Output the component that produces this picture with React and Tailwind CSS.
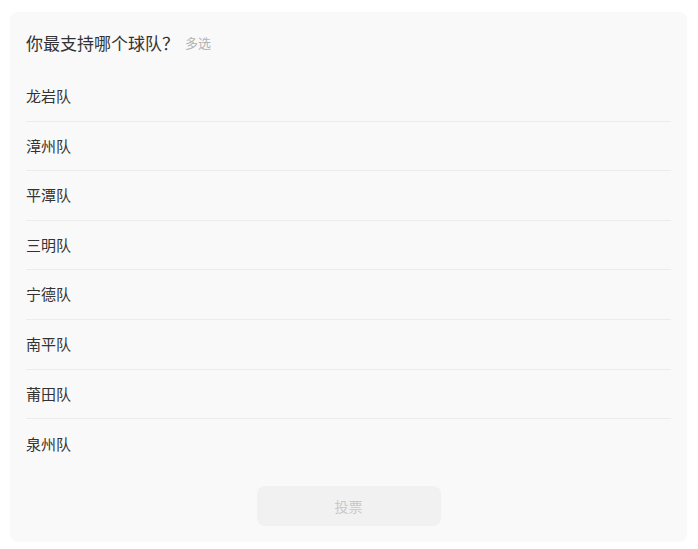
import React from 'react'

const teams = ['龙岩队', '漳州队', '平潭队', '三明队', '宁德队', '南平队', '莆田队', '泉州队']

const App = () => {
  return (
    <div
      className="min-h-screen bg-white pt-[12px] px-[10px]"
      style={{ fontFamily: '"Noto Sans CJK SC", "Noto Sans", sans-serif' }}
    >
      <div className="w-[677px] rounded-lg bg-[#f9f9f9] px-4 pt-[19px] pb-4">
        <div className="flex items-center h-6 mb-[17px]">
          <span className="text-[17px] leading-6 text-[#333]">你最支持哪个球队？</span>
          <span className="ml-[6px] text-[13px] text-[#b3b3b3]">多选</span>
        </div>
        <ul>
          {teams.map((t, i) => (
            <li
              key={t}
              className={
                'h-[49.6px] flex items-center text-[15px] text-[#333] ' +
                (i < teams.length - 1 ? 'border-b border-[#ececec]' : '')
              }
            >
              {t}
            </li>
          ))}
        </ul>
        <div className="flex justify-center mt-[17px]">
          <button className="w-[184px] h-10 rounded-lg bg-[#f1f1f1] text-sm text-[#c8c8c8]">
            投票
          </button>
        </div>
      </div>
    </div>
  )
}

export default App
